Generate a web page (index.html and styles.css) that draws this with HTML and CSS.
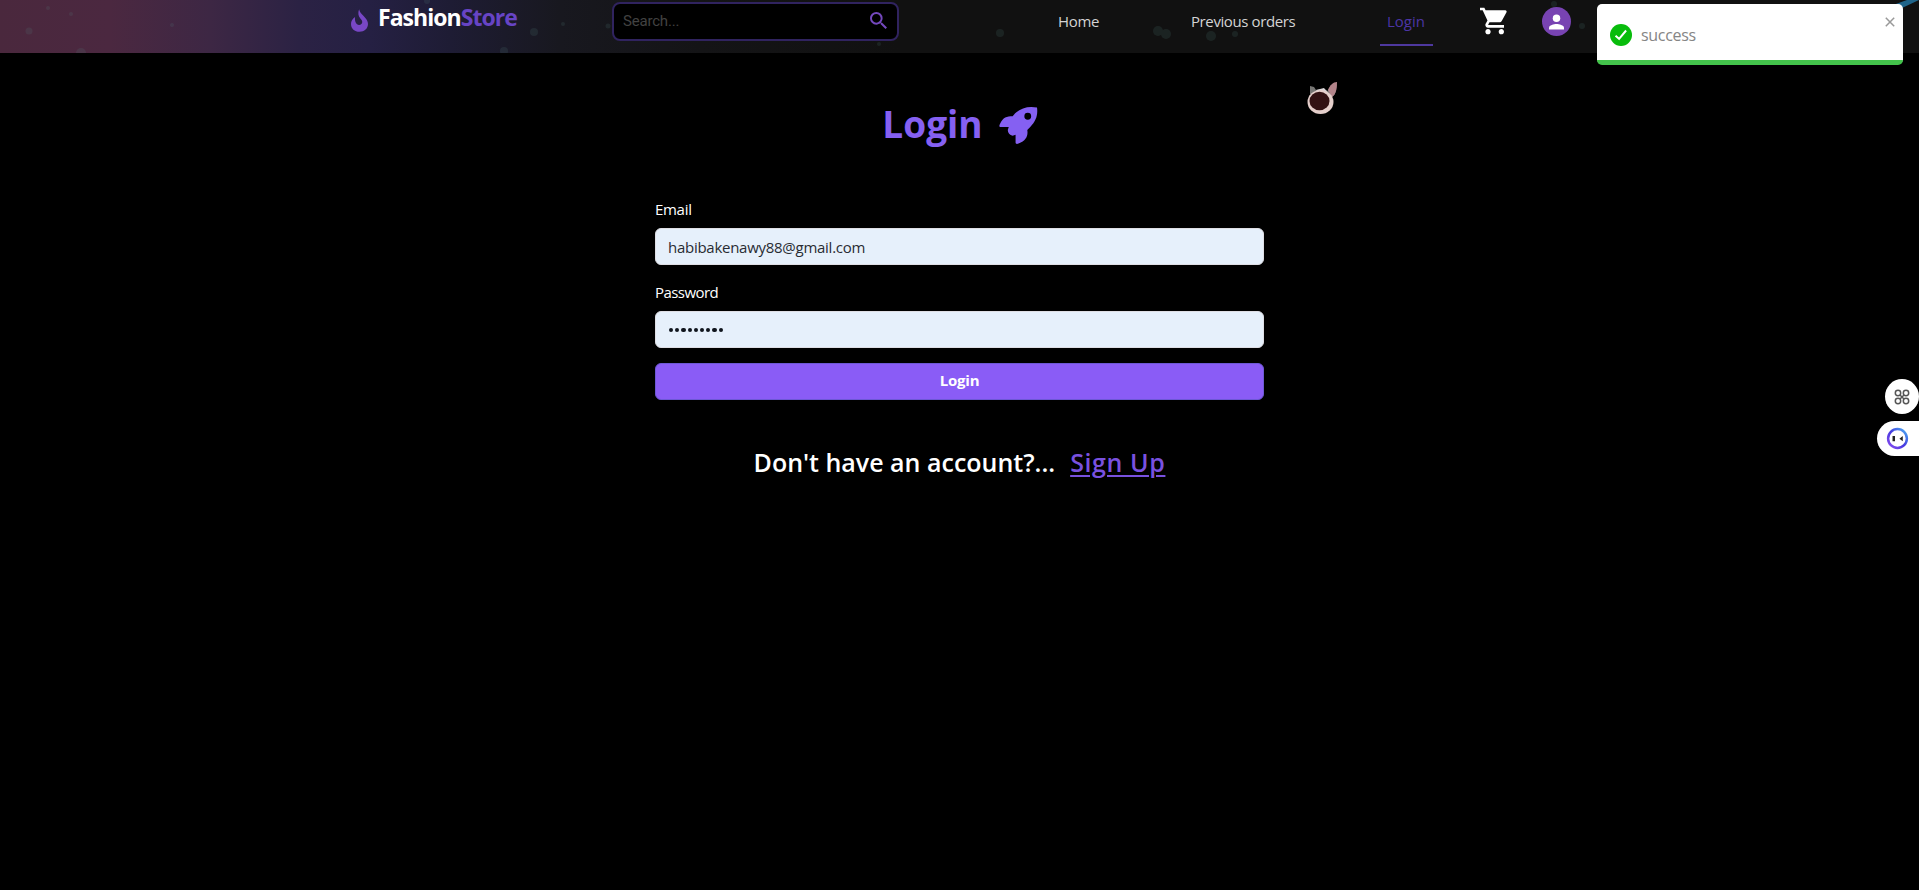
FILE: index.html
```html
<!DOCTYPE html>
<html lang="en">
<head>
<meta charset="utf-8">
<title>FashionStore</title>
<link rel="stylesheet" href="styles.css">
</head>
<body>
<header class="navbar">
  <a class="brand">
    <svg class="flame" viewBox="0 0 18 24"><path d="M8.600 0c.5 3 2.500 4.800 5 7.500C16.300 10.300 18 12.400 18 15.800 18 20.500 14.200 24 9 24s-9-3.400-9-8.300c0-2.900 1.400-5.200 4.300-7.400-.2 2.500-.1 4.200.7 5.900.7 1.600 1.900 2.600 3.600 2.600 1.900 0 3.300-1.300 3.300-3.100 0-1.500-.7-2.500-2-3.900C7.600 7.300 7.200 3.500 8.600 0z"/></svg>
    <span class="brand-name">Fashion<span class="brand-accent">Store</span></span>
  </a>
  <div class="search">
    <span class="placeholder">Search...</span>
    <svg class="search-icon" viewBox="3 3 17.500 17.500"><path d="M15.500 14h-.79l-.28-.27A6.471 6.471 0 0 0 16 9.500 6.500 6.500 0 1 0 9.500 16c1.610 0 3.090-.59 4.230-1.570l.27.28v.79l5 4.990L20.490 19l-4.990-5zm-6 0C7.010 14 5 11.990 5 9.500S7.010 5 9.500 5 14 7.010 14 9.500 11.990 14 9.500 14z"/></svg>
  </div>
  <nav class="links">
    <a class="link home">Home</a>
    <a class="link orders">Previous orders</a>
    <a class="link active">Login</a>
  </nav>
  <svg class="cart" viewBox="1 2 21 20"><path d="M7 18c-1.100 0-1.990.9-1.990 2S5.900 22 7 22s2-.9 2-2-.9-2-2-2zM1 2v2h2l3.600 7.590-1.350 2.450c-.16.28-.25.61-.25.96 0 1.100.9 2 2 2h12v-2H7.420c-.14 0-.25-.11-.25-.25l.03-.12.900-1.630h7.450c.75 0 1.410-.41 1.750-1.030l3.580-6.490A1 1 0 0 0 20 4H5.210l-.94-2H1zm16 16c-1.100 0-1.990.9-1.990 2s.89 2 1.990 2 2-.9 2-2-.9-2-2-2z"/></svg>
  <span class="avatar"><svg viewBox="0 0 16 16"><circle cx="8" cy="4" r="4"/><path d="M0 16v-2c0-2.700 5.300-4 8-4s8 1.300 8 4v2z"/></svg></span>
  <svg class="specks" viewBox="0 0 1919 53"><g fill="#54817e" opacity=".16"><circle cx="81" cy="53" r="5"/><circle cx="29" cy="31" r="3.500"/><circle cx="534" cy="32" r="4"/><circle cx="504" cy="51" r="4"/><circle cx="563" cy="24" r="2"/><circle cx="427" cy="1" r="3"/><circle cx="608" cy="26" r="2.500"/><circle cx="879" cy="44" r="2"/><circle cx="1000" cy="33" r="4"/><circle cx="1158" cy="31" r="5"/><circle cx="1166" cy="34" r="5"/><circle cx="1211" cy="36" r="5"/><circle cx="1235" cy="34" r="3"/><circle cx="1554" cy="4" r="3"/><circle cx="1582" cy="26" r="3"/><circle cx="48" cy="8" r="2"/><circle cx="71" cy="14" r="2"/><circle cx="172" cy="25" r="2"/></g><path d="M1893 5l14-5h12l-17 8z" fill="#20658a"/></svg>
</header>

<main class="page">
  <h1 class="title"><span>Login</span>
    <svg class="rocket" viewBox="0 0 40 39"><path fill-rule="evenodd" d="M39 1c1 8-1 14-7 20l-3 3c1 6-1 11-9 14-2 1-3 0-3-1v-8l-3 1c-3-1-5-3-5-6l1-3H2c-2 0-2-1-1-3 3-7 7-8 13-8C20 2 29-1 39 1zM29.500 6.500a3.500 3.500 0 1 0 0 7 3.500 3.500 0 0 0 0-7z"/></svg>
  </h1>
  <form class="form">
    <label class="label email-label">Email</label>
    <div class="field"><span class="email">habibakenawy88@gmail.com</span></div>
    <label class="label password-label">Password</label>
    <div class="field"><span class="dots"><i></i><i></i><i></i><i></i><i></i><i></i><i></i><i></i><i></i></span></div>
    <button class="submit" type="button">Login</button>
  </form>
  <p class="signup"><span class="question">Don't have an account?...</span><a class="signup-link">Sign Up</a></p>
</main>

<svg class="cat" viewBox="0 0 34 34"><path d="M4 13V5l4 1 2 3 8-1 4 2c1-4 4-7 8-8 1 5 0 12-4 14z" fill="#777674"/><path d="M22 9c2-5 5-8 9-8 0 7-1 12-5 15z" fill="#b4858b"/><path d="M10 9l8-2 5 6-9 1z" fill="#ddd8da"/><ellipse cx="14.500" cy="21" rx="13" ry="12" fill="#e5cfcb"/><ellipse cx="13.500" cy="20" rx="10" ry="9.300" fill="#321112"/></svg>

<aside class="toast">
  <svg class="check" viewBox="0 0 22 22"><circle cx="11" cy="11" r="11" fill="#08bc0c"/><path d="M5.500 11.800l3.600 3 7-8.300" fill="none" stroke="#fff" stroke-width="2"/></svg>
  <span class="toast-text">success</span>
  <svg class="close" viewBox="0 0 10 10"><path d="M.8.8l8.400 8.400M9.200.8L.8 9.200"/></svg>
</aside>

<div class="float-round"><svg viewBox="0 0 16 16"><circle cx="4" cy="4" r="2.700"/><circle cx="12" cy="4" r="2.700"/><circle cx="4" cy="12" r="2.700"/><circle cx="12" cy="12" r="2.700"/><path d="M6 6l4 4M10 6l-4 4"/></svg></div>
<div class="float-pill"><svg viewBox="0 0 24 24"><defs><linearGradient id="ring" x1="0" y1="1" x2="1" y2="0"><stop offset="0" stop-color="#8a4df0"/><stop offset=".5" stop-color="#4539df"/><stop offset="1" stop-color="#4bb4f4"/></linearGradient></defs><circle cx="12" cy="12" r="9.800" fill="#fff" stroke="url(#ring)" stroke-width="2.600"/><path d="M6.800 9.500h2.600v5.300H6.800zM17.500 9.500v5.300L14 12.200z" fill="#222"/></svg></div>
</body>
</html>
```
FILE: styles.css
```css
* { box-sizing: border-box; }
body {
  margin: 0;
  height: 890px;
  overflow: hidden;
  background: #000;
  color: #fff;
  font-family: "Open Sans", "Noto Sans", sans-serif;
}
svg { display: block; }
.navbar {
  position: relative;
  display: flex;
  height: 53px;
  padding-left: 351px;
  background: linear-gradient(90deg, #4a283d 0, #4b2840 110px, #3d2744 210px, #2b2244 300px, #252043 370px, #1e1c34 450px, #18181f 560px, #141416 700px, #111 900px);
}
.brand { display: flex; width: 261px; }
.flame { width: 17px; height: 23px; margin-top: 9px; fill: #7847c5; }
.brand-name { margin: 1px 0 0 10px; font-size: 23px; line-height: 33px; font-weight: 700; letter-spacing: -.95px; white-space: nowrap; }
.brand-accent { color: #6744c5; }
.search {
  display: flex;
  justify-content: space-between;
  width: 287px;
  height: 39px;
  margin-top: 2px;
  padding: 8px 10px 0 9px;
  border: 2px solid #30235f;
  border-radius: 8px;
  background: #000;
}
.placeholder { color: #424242; font: 15px/18px Roboto, sans-serif; letter-spacing: -.2px; }
.search-icon { width: 17px; height: 17px; fill: #7448bd; }
.links { display: flex; margin-left: 159px; }
.link { height: 46px; padding-top: 10px; font-size: 15px; line-height: 22px; white-space: nowrap; color: #d4d4d4; }
.home { width: 133px; letter-spacing: -.3px; }
.orders { width: 189px; letter-spacing: -.4px; }
.active { width: 53px; padding-left: 7px; border-bottom: 2px solid #4e389f; color: #4c35a5; }
.cart { width: 28px; height: 28px; margin: 7px 0 0 47px; fill: #fff; }
.avatar { display: grid; place-items: center; width: 29px; height: 29px; margin: 7px 0 0 34px; border-radius: 50%; background: #7843b2; }
.avatar svg { width: 15px; height: 16px; fill: #fff; }
.specks { position: absolute; left: 0; top: 0; width: 1919px; height: 53px; pointer-events: none; }
.page { display: flex; flex-direction: column; align-items: center; }
.title { display: flex; gap: 16px; margin: 44px 0 0 1px; font-size: 37px; line-height: 54px; font-weight: 700; color: #8560f2; }
.rocket { width: 39px; height: 39px; margin-top: 9px; fill: #8560f2; }
.form { display: flex; flex-direction: column; width: 609px; margin-top: 47px; }
.label { height: 30px; font-size: 15px; line-height: 22px; }
.email-label { letter-spacing: -.3px; }
.password-label { margin-top: 16px; letter-spacing: -.55px; }
.field { display: flex; align-items: center; height: 37px; padding-left: 12px; border: 1px solid #dedee4; border-radius: 6px; background: #e6f0fb; color: #292c33; font-size: 15px; }
.email { letter-spacing: -.27px; }
.dots { display: flex; gap: 2px; margin: 1px 0 0 1px; }
.dots i { width: 4.200px; height: 4.200px; border-radius: 50%; background: #10151d; }
.submit { height: 37px; margin-top: 15px; padding: 0 0 3px; border: 1px solid #6d58d5; border-radius: 6px; background: #8a5cf6; color: #fff; font: 700 15px/22px "Open Sans", sans-serif; letter-spacing: -.2px; }
.signup { display: flex; gap: 15px; margin: 44px 0 0; font-size: 25px; line-height: 36px; font-weight: 600; }
.question { letter-spacing: 0; }
.signup-link { color: #7951df; letter-spacing: .6px; text-decoration: underline; text-decoration-thickness: 2px; text-underline-offset: 3px; }
.cat { position: absolute; left: 1306px; top: 81px; width: 34px; height: 34px; }
.toast { position: absolute; left: 1597px; top: 4px; display: flex; width: 306px; height: 61px; padding-left: 13px; border-bottom: 5px solid #43c34b; border-radius: 5px; background: #fff; }
.check { width: 22px; height: 22px; margin-top: 20px; }
.toast-text { margin: 20px 0 0 9px; color: #858585; font: 16px/22px "Open Sans", sans-serif; letter-spacing: -.3px; }
.close { width: 10px; height: 10px; margin: 13px 8px 0 auto; fill: none; stroke: #999; stroke-width: 1.500; }
.float-round { position: absolute; left: 1885px; top: 379px; display: grid; place-items: center; width: 34px; height: 35px; border-radius: 50%; background: #fff; }
.float-round svg { width: 16px; height: 16px; fill: none; stroke: #565656; stroke-width: 1.500; }
.float-pill { position: absolute; left: 1877px; top: 421px; width: 42px; height: 35px; padding: 6px 0 0 9px; border-radius: 18px 0 0 18px; background: #fff; }
.float-pill svg { width: 23px; height: 23px; }
```
